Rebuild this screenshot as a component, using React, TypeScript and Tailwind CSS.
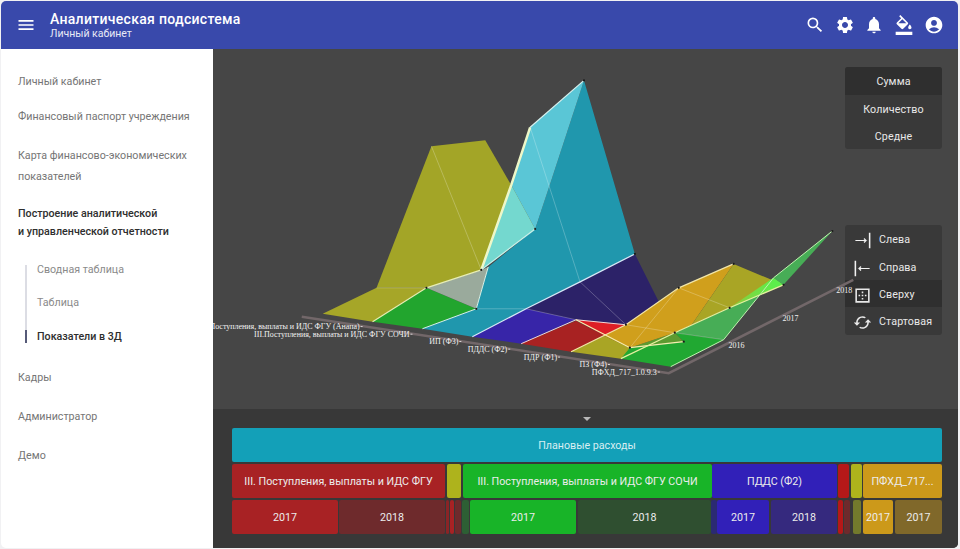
import {
  MdAccountCircle,
  MdBorderOuter,
  MdCached,
  MdFormatColorFill,
  MdMenu,
  MdNotifications,
  MdSearch,
  MdSettings,
} from "react-icons/md";

const faces: [string, string][] = [
  ["323,314 377,288 427,288 373,322", "#a6a628"],
  ["377,288 432,146 486,140 512,185 536,229 482,270 427,288", "#a3a527"],
  ["373,322 427,288 477,309 423,329", "#22a52e"],
  ["427,288 482,270 489,267 477,309", "#9aaa9c"],
  ["423,329 477,309 489,267 536,229 550,187 585,80 636,254 581,282 527,309 473,337", "#2097ad"],
  ["512,185 531,127 585,80 550,187 536,229", "#5ac6d6"],
  ["512,185 536,229 482,270", "#74d8cf"],
  ["527,309 581,282 636,254 660,302 627,325 577,320", "#2c2268"],
  ["473,337 527,309 577,320 522,344", "#3725a8"],
  ["522,344 577,321 605,336 572,352", "#a82222"],
  ["577,320 627,325 605,336", "#dd1f26"],
  ["572,352 605,336 631,348 650,345 622,359", "#a9a525"],
  ["622,359 631,348 685,342 676,333 725,340 672,367", "#21a832"],
  ["631,348 676,333 685,342", "#5d9a30"],
  ["605,336 627,325 680,288 735,264 693,325 676,333 631,348", "#d09f1c"],
  ["735,264 785,285 731,308 693,325", "#a9a525"],
  ["676,333 731,308 763,293 725,340", "#47ad56"],
  ["775,278 834,231 785,285", "#47ad56"],
  ["731,308 775,278 785,285", "url(#ridge)"],
];

const lines: [string, string, number][] = [
  ["373,322 427,288 482,270", "#e8eeb4", 1.2],
  ["482,270 512,185 531,127", "#eef7c8", 2.5],
  ["531,127 585,80", "#d8f2f0", 1.2],
  ["482,270 536,229", "#c8f2ec", 1.2],
  ["423,329 477,309 489,267", "#d8f2e8", 1],
  ["473,337 527,309 581,282 636,254", "#d8eaf8", 1.2],
  ["522,344 577,320 627,325", "#f0d8d8", 1],
  ["572,352 627,325 680,288 735,264", "#f2e6a8", 1.2],
  ["577,320 631,348 685,342", "#f6eeb0", 1.2],
  ["622,359 676,333 731,308 785,285", "#e6f0a0", 1.2],
  ["672,367 725,340 763,293 775,278 834,231", "#c0f2b0", 1],
];

const thinLines: string[] = [
  "432,146 482,270",
  "531,127 581,282 627,325",
  "477,309 527,309 577,320",
  "627,325 676,333 725,340",
  "680,288 731,308",
  "680,288 631,348",
  "377,288 427,288",
];

const dots: [number, number][] = [
  [427, 288], [482, 270], [477, 309], [536, 229], [585, 80], [636, 254], [627, 325],
  [631, 348], [676, 333], [685, 342], [680, 288], [735, 264], [731, 308], [785, 285], [834, 231],
];

const labels: [string, number, number][] = [
  ["III.Поступления, выплаты и ИДС ФГУ (Анапа)", 360, 329.5],
  ["III.Поступления, выплаты и ИДС ФГУ СОЧИ", 410, 337],
  ["ИП (Ф3)", 459, 344.5],
  ["ПДДС (Ф2)", 508, 352],
  ["ПДР (Ф1)", 558, 360],
  ["ПЗ (Ф4)", 608, 367.5],
  ["ПФХД_717_1.0.9.3", 658, 375],
];

const years: [string, number, number][] = [
  ["2016", 738, 348.5],
  ["2017", 792, 321],
  ["2018", 846, 293.5],
];

const Chart = () => (
  <svg viewBox="213 49 747 360" className="pointer-events-none absolute inset-0 h-full w-full">
    <defs>
      <linearGradient id="ridge" x1="731" y1="0" x2="775" y2="0" gradientUnits="userSpaceOnUse">
        <stop offset="0" stopColor="#93c83a" />
        <stop offset="1" stopColor="#5cee4b" />
      </linearGradient>
    </defs>
    {faces.map(([points, fill]) => (
      <polygon key={points} points={points} fill={fill} />
    ))}
    {thinLines.map((points) => (
      <polyline key={points} points={points} fill="none" stroke="#ffffff" strokeOpacity="0.35" strokeWidth="0.7" />
    ))}
    {lines.map(([points, stroke, width]) => (
      <polyline key={points} points={points} fill="none" stroke={stroke} strokeWidth={width} />
    ))}
    {dots.map(([x, y]) => (
      <circle key={`${x}-${y}`} cx={x} cy={y} r="1.1" fill="#1a1a1a" />
    ))}
    <polyline points="302,317 670,373.500 855,280" fill="none" stroke="#726769" strokeWidth="2.500" />
    {labels.map(([label, x, y]) => (
      <g key={label}>
        <text x={x} y={y} textAnchor="end" fontSize="8" fill="#f2f2f2" fontFamily="Liberation Serif, serif">
          {label}
        </text>
        <rect x={x + 1} y={y - 3} width="2" height="0.8" fill="#f2f2f2" />
      </g>
    ))}
    {years.map(([label, x, y]) => (
      <text key={label} x={x} y={y} textAnchor="middle" fontSize="8" fill="#f2f2f2" fontFamily="Liberation Serif, serif">
        {label}
      </text>
    ))}
  </svg>
);

const ArrowIn = ({ flip }: { flip?: boolean }) => (
  <svg viewBox="0 0 16 16" className={flip ? "h-[19px] w-[19px] -scale-x-100" : "h-[19px] w-[19px]"} fill="none" stroke="#f2f2f2">
    <path d="M2 8h9" strokeWidth="1" />
    <path d="M9.500 6 11.500 8 9.500 10z" fill="#f2f2f2" strokeWidth="0.4" />
    <path d="M14 1.500v13" strokeWidth="1.3" />
  </svg>
);

const row2 = [
  { label: "III. Поступления, выплаты и ИДС ФГУ", className: "w-[213px] bg-[#a82224]" },
  { label: "", className: "w-[14px] ml-[2px] bg-[#aeb31c]" },
  { label: "III. Поступления, выплаты и ИДС ФГУ СОЧИ", className: "w-[249px] ml-[2px] bg-[#18b428]" },
  { label: "ПДДС (Ф2)", className: "w-[125px] bg-[#3120b8]" },
  { label: "", className: "w-[11px] ml-[1px] bg-[#b51818]" },
  { label: "", className: "w-[11px] ml-[2px] bg-[#aeb31c]" },
  { label: "ПФХД_717...", className: "w-[79px] ml-[1px] bg-[#cc991a]" },
];

const row3 = [
  { label: "2017", className: "w-[106px] bg-[#a82224]" },
  { label: "2018", className: "w-[106px] ml-px bg-[#6e2a2c]" },
  { label: "", className: "w-[3px] ml-px bg-[#8a2426]" },
  { label: "", className: "w-[4px] ml-px bg-[#a82224]" },
  { label: "", className: "w-[6px] ml-px bg-[#6e2a2c]" },
  { label: "", className: "w-[7px] ml-px bg-[#2d5f34]" },
  { label: "2017", className: "w-[106px] ml-px bg-[#18b428]" },
  { label: "2018", className: "w-[133px] ml-[2px] bg-[#2f4f30]" },
  { label: "", className: "w-[6px] bg-[#2b2a72]" },
  { label: "2017", className: "w-[52px] bg-[#3120b8]" },
  { label: "2018", className: "w-[66px] ml-[2px] bg-[#35297e]" },
  { label: "", className: "w-[5px] ml-px bg-[#b51818]" },
  { label: "", className: "w-[6px] ml-px bg-[#6e2a2c]" },
  { label: "", className: "w-[8px] ml-[3px] bg-[#737a2c]" },
  { label: "2017", className: "w-[30px] ml-[2px] bg-[#cc991a]" },
  { label: "2017", className: "w-[47px] ml-[2px] bg-[#80682a]" },
];

const Cell = ({ label, className }: { label: string; className: string }) => (
  <div className={`flex h-full shrink-0 items-center justify-center overflow-hidden whitespace-nowrap rounded-[2px] pt-[2px] text-[10.700px] text-[#ececec] ${className}`}>
    {label}
  </div>
);

export default function App() {
  return (
    <div className="h-[549px] w-[960px] overflow-hidden bg-[#f1f1f3] pb-[1px] pl-[1px] pr-[2px] pt-[1px] font-['Roboto',sans-serif]">
      <div className="flex h-full flex-col overflow-hidden rounded-[5px]">
        <header className="flex h-[48px] shrink-0 items-center bg-[#3949ab] text-white">
          <MdMenu className="ml-[15px] h-[20px] w-[20px]" />
          <div className="ml-[14px]">
            <div className="-mt-[1px] text-[14px] font-medium leading-[18px] tracking-[0.3px]">Аналитическая подсистема</div>
            <div className="text-[10.500px] leading-[12px] text-[#e8eaf6]">Личный кабинет</div>
          </div>
          <div className="ml-auto mr-[14px] flex items-center gap-[10px]">
            <MdSearch className="-mr-px h-[20px] w-[20px] -translate-x-px" />
            <MdSettings className="-mr-px h-[20px] w-[20px]" />
            <MdNotifications className="h-[20px] w-[20px]" />
            <MdFormatColorFill className="h-[20px] w-[20px]" />
            <MdAccountCircle className="h-[20px] w-[20px]" />
          </div>
        </header>
        <div className="flex min-h-0 flex-1">
          <aside className="w-[212px] shrink-0 bg-white pl-[17px] text-[10.700px] text-[#757575]">
            <div className="mt-[16px] flex h-[34px] items-center">Личный кабинет</div>
            <div className="flex h-[36px] items-center">Финансовый паспорт учреждения</div>
            <div className="mt-[11px] leading-[20.500px]">
              Карта финансово-экономических
              <br />
              показателей
            </div>
            <div className="mt-[18px] font-medium leading-[18px] text-[#2e2e2e]">
              Построение аналитической
              <br />
              и управленческой отчетности
            </div>
            <div className="ml-[7px] mt-[24px] border-l-2 border-[#dcdde4] pl-[10px] text-[#8a8a8a]">
              <div className="h-[21px] leading-[10px]">Сводная таблица</div>
              <div className="flex h-[34px] items-center">Таблица</div>
              <div className="relative h-[23px] pt-[10px] font-medium leading-[13px] text-[#2e2e2e]">
                <span className="absolute -left-[12px] bottom-0 h-[13px] w-[2px] bg-[#565a78]" />
                Показатели в 3Д
              </div>
            </div>
            <div className="mt-[25px] flex h-[20px] items-center">Кадры</div>
            <div className="mt-[19px] flex h-[20px] items-center">Администратор</div>
            <div className="mt-[19px] flex h-[20px] items-center">Демо</div>
          </aside>
          <main className="flex min-w-0 flex-1 flex-col bg-[#464646]">
            <div className="relative flex-1">
              <div className="absolute right-[16px] top-[18px] w-[97px] overflow-hidden rounded-[3px] bg-[#393939] text-center text-[10.700px] tracking-[0.1px] text-[#e8e8e8]">
                <div className="flex h-[28px] items-center justify-center bg-[#2f2f2f] pt-[3px]">Сумма</div>
                <div className="flex h-[27px] items-center justify-center pt-[3px]">Количество</div>
                <div className="flex h-[27px] items-center justify-center pt-[3px]">Средне</div>
              </div>
              <div className="absolute right-[16px] top-[176px] w-[97px] overflow-hidden rounded-[3px] bg-[#393939] text-[10.700px] tracking-[0.1px] text-[#e8e8e8]">
                <div className="flex h-[28px] items-center gap-[7px] pl-[8px] pt-[3px]">
                  <ArrowIn />
                  Слева
                </div>
                <div className="flex h-[27px] items-center gap-[7px] pl-[8px] pt-[3px]">
                  <ArrowIn flip />
                  Справа
                </div>
                <div className="flex h-[27px] items-center gap-[7px] bg-[#2f2f2f] pl-[8px] pt-[3px]">
                  <MdBorderOuter className="h-[19px] w-[19px]" />
                  Сверху
                </div>
                <div className="flex h-[28px] items-center gap-[7px] pl-[8px] pt-[3px]">
                  <MdCached className="h-[19px] w-[19px]" />
                  Стартовая
                </div>
              </div>
              <Chart />
            </div>
            <div className="relative h-[139px] shrink-0 bg-[#383838] pl-[19px] pt-[19px]">
              <div className="absolute left-[370px] top-[8px] h-0 w-0 border-x-[4px] border-t-[4px] border-x-transparent border-t-[#b8b8b8]" />
              <div className="flex h-[34px] w-[710px] items-center justify-center rounded-[2px] bg-[#13a0b8] pt-[2px] text-[10.700px] text-[#d8eef2]">
                Плановые расходы
              </div>
              <div className="mt-[2px] flex h-[34px] w-[710px]">
                {row2.map((cell, i) => (
                  <Cell key={i} {...cell} />
                ))}
              </div>
              <div className="mt-[2px] flex h-[34px] w-[710px]">
                {row3.map((cell, i) => (
                  <Cell key={i} {...cell} />
                ))}
              </div>
            </div>
          </main>
        </div>
      </div>
    </div>
  );
}
